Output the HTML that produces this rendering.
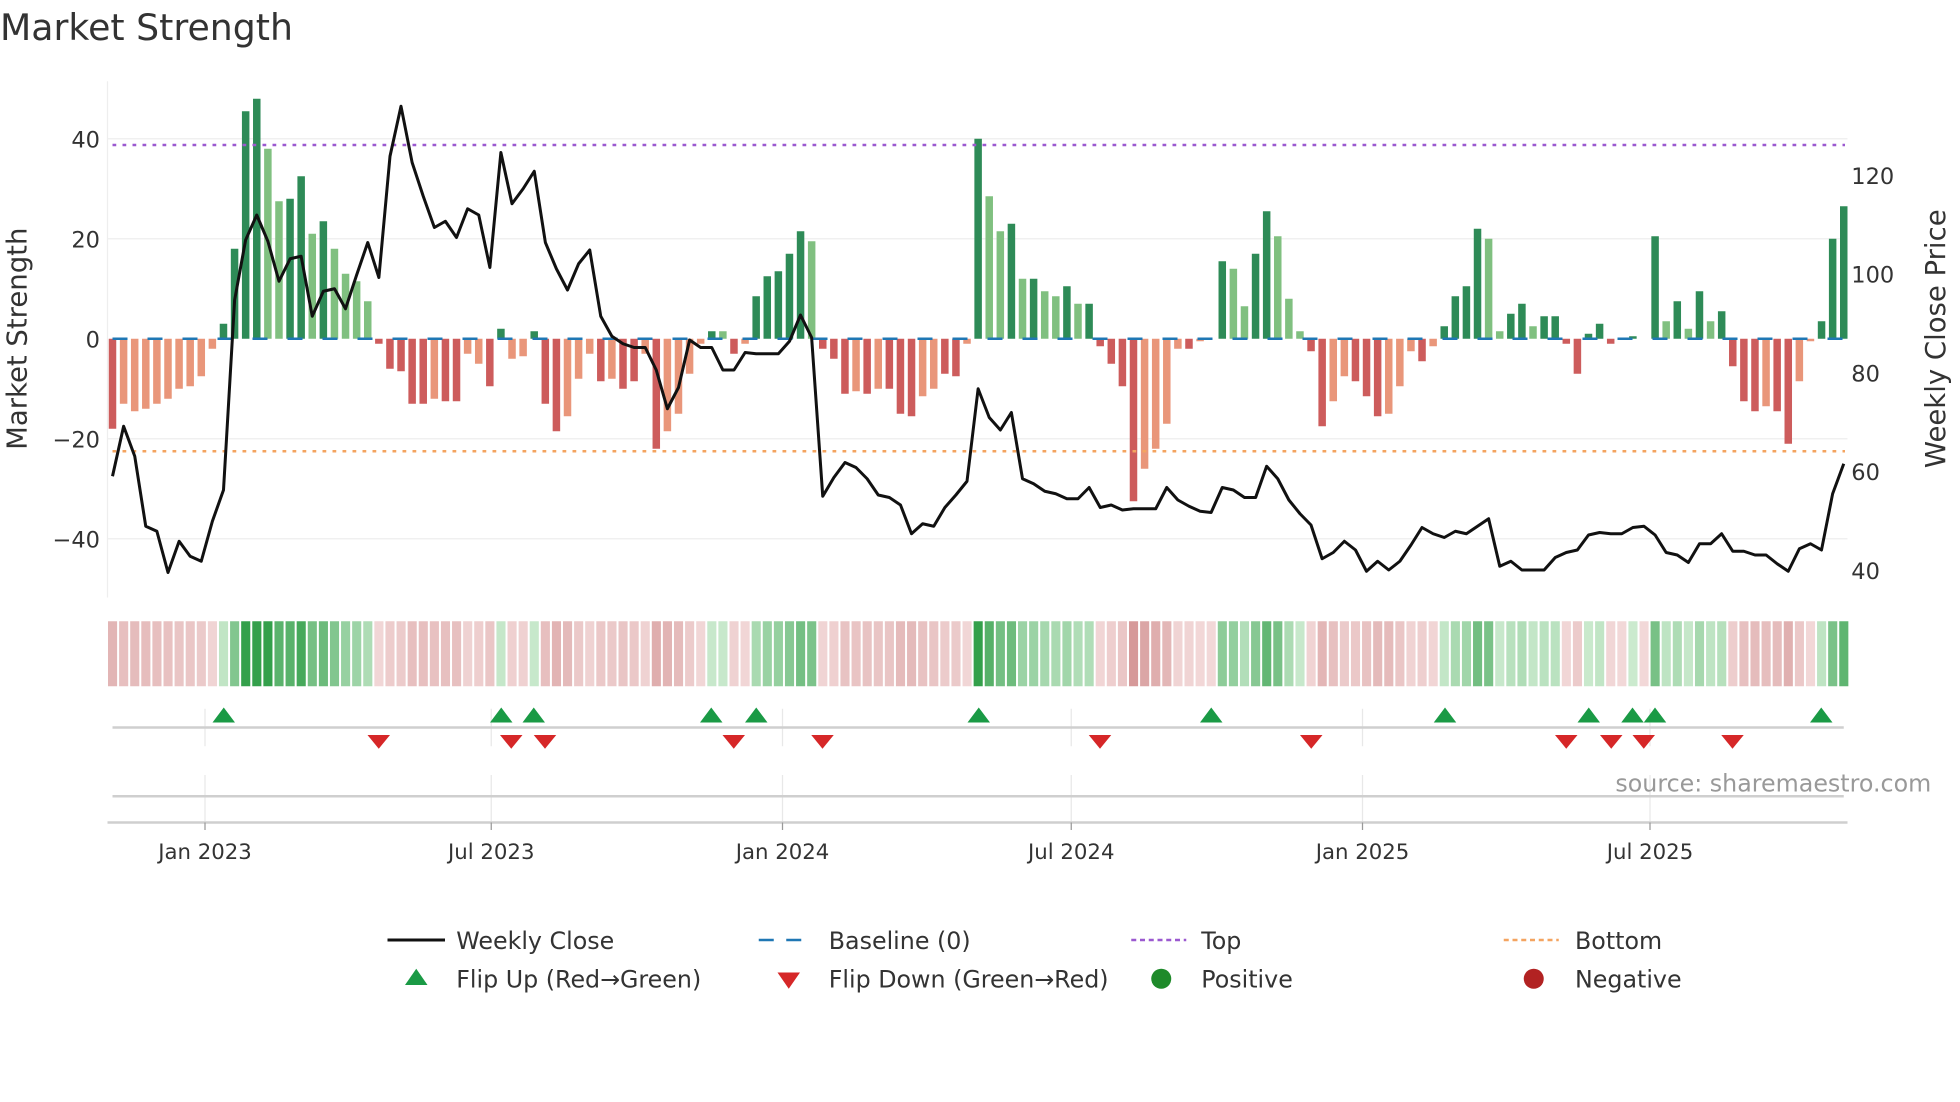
<!DOCTYPE html>
<html><head><meta charset="utf-8"><style>
html,body{margin:0;padding:0;background:#fff;}
svg{display:block;font-family:"DejaVu Sans","Liberation Sans",sans-serif;}
</style></head><body>
<svg id="s" width="1960" height="1102" viewBox="0 0 1568 881.6" xmlns="http://www.w3.org/2000/svg">
<rect width="1568" height="882" fill="#fff"/>
<text x="0" y="32" font-size="29" fill="#333">Market Strength</text>
<g id="grid" stroke="#eeeeee" stroke-width="1">
<line x1="86" y1="111" x2="1478" y2="111"/><line x1="86" y1="191" x2="1478" y2="191"/>
<line x1="86" y1="351" x2="1478" y2="351"/><line x1="86" y1="431" x2="1478" y2="431"/>
<line x1="86" y1="65" x2="86" y2="478"/>
</g>
<g id="bars"></g>
<line x1="90" y1="271" x2="1476" y2="271" stroke="#1f77b4" stroke-width="2" stroke-dasharray="12,16"/>
<line x1="90" y1="116" x2="1476" y2="116" stroke="#9b59d0" stroke-width="2" stroke-dasharray="3,5"/>
<line x1="90" y1="361" x2="1476" y2="361" stroke="#f4a460" stroke-width="2" stroke-dasharray="3,5"/>
<polyline id="price" fill="none" stroke="#111" stroke-width="2.4" stroke-linejoin="round"/>
<g font-size="18" fill="#333" text-anchor="end">
<text x="80" y="118">40</text><text x="80" y="198">20</text><text x="80" y="278">0</text>
<text x="80" y="358">−20</text><text x="80" y="438">−40</text></g>
<g font-size="18" fill="#333">
<text x="1481" y="147">120</text><text x="1481" y="226">100</text><text x="1481" y="305">80</text>
<text x="1481" y="384">60</text><text x="1481" y="463">40</text></g>
<text transform="translate(21,271) rotate(-90)" font-size="22" fill="#333" text-anchor="middle">Market Strength</text>
<text transform="translate(1556,271) rotate(-90)" font-size="22" fill="#333" text-anchor="middle">Weekly Close Price</text>
<g id="heat"></g>
<g stroke="#e8e8e8" stroke-width="1" id="vgrid"></g>
<line x1="90" y1="582" x2="1475" y2="582" stroke="#cfcfcf" stroke-width="2"/>
<line x1="90" y1="637" x2="1475" y2="637" stroke="#cfcfcf" stroke-width="2"/>
<line x1="86" y1="658" x2="1478" y2="658" stroke="#cfcfcf" stroke-width="2"/>
<g id="marks"></g>
<g id="ticks" font-size="17" fill="#333" text-anchor="middle"></g>
<text x="1545" y="633" font-size="19" fill="#999" text-anchor="end">source: sharemaestro.com</text>
<g font-size="19" fill="#333">
<line x1="310" y1="752" x2="356" y2="752" stroke="#111" stroke-width="2.4"/>
<text x="365" y="759">Weekly Close</text>
<line x1="607" y1="752" x2="651" y2="752" stroke="#1f77b4" stroke-width="2" stroke-dasharray="12,10"/>
<text x="663" y="759">Baseline (0)</text>
<line x1="905" y1="752" x2="949" y2="752" stroke="#9b59d0" stroke-width="2" stroke-dasharray="4,3"/>
<text x="961" y="759">Top</text>
<line x1="1203" y1="752" x2="1247" y2="752" stroke="#f4a460" stroke-width="2" stroke-dasharray="4,3"/>
<text x="1260" y="759">Bottom</text>
<polygon points="324,788 342,788 333,775" fill="#1a9a45"/>
<text x="365" y="790">Flip Up (Red→Green)</text>
<polygon points="622,778 640,778 631,791" fill="#d62728"/>
<text x="663" y="790">Flip Down (Green→Red)</text>
<circle cx="929" cy="783" r="8" fill="#1e8a2a"/>
<text x="961" y="790">Positive</text>
<circle cx="1227" cy="783" r="8" fill="#b22222"/>
<text x="1260" y="790">Negative</text>
</g>
</svg>
<script>
var V=[[-18,1],[-13,0],[-14.5,0],[-14,0],[-13,0],[-12,0],[-10,0],[-9.5,0],[-7.5,0],[-2,0],[3,1],[18,1],[45.5,1],[48,1],[38,0],[27.5,0],[28,1],[32.5,1],[21,0],[23.5,1],[18,0],[13,0],[11.5,0],[7.5,0],[-1,1],[-6,1],[-6.5,1],[-13,1],[-13,1],[-12,0],[-12.5,1],[-12.5,1],[-3,0],[-5,0],[-9.5,1],[2,1],[-4,0],[-3.5,0],[1.5,1],[-13,1],[-18.5,1],[-15.5,0],[-8,0],[-3,0],[-8.5,1],[-8,0],[-10,1],[-8.5,1],[-3,0],[-22,1],[-18.5,0],[-15,0],[-7,0],[-1,0],[1.5,1],[1.5,0],[-3,1],[-1,0],[8.5,1],[12.5,1],[13.5,1],[17,1],[21.5,1],[19.5,0],[-2,1],[-4,1],[-11,1],[-10.5,0],[-11,1],[-10,0],[-10,1],[-15,1],[-15.5,1],[-11.5,0],[-10,0],[-7,1],[-7.5,1],[-1,0],[40,1],[28.5,0],[21.5,0],[23,1],[12,0],[12,1],[9.5,0],[8.5,0],[10.5,1],[7,0],[7,1],[-1.5,1],[-5,1],[-9.5,1],[-32.5,1],[-26,0],[-22,0],[-17,0],[-2,0],[-2,1],[-0.5,0],[0,0],[15.5,1],[14,0],[6.5,0],[17,1],[25.5,1],[20.5,0],[8,0],[1.5,0],[-2.5,1],[-17.5,1],[-12.5,0],[-7.5,0],[-8.5,1],[-11.5,1],[-15.5,1],[-15,0],[-9.5,0],[-2.5,0],[-4.5,1],[-1.5,0],[2.5,1],[8.5,1],[10.5,1],[22,1],[20,0],[1.5,0],[5,1],[7,1],[2.5,0],[4.5,1],[4.5,1],[-1,1],[-7,1],[1,1],[3,1],[-1,1],[0,0],[0.5,1],[0,0],[20.5,1],[3.5,0],[7.5,1],[2,0],[9.5,1],[3.5,0],[5.5,1],[-5.5,1],[-12.5,1],[-14.5,1],[-13.5,0],[-14.5,1],[-21,1],[-8.5,0],[-0.5,0],[3.5,1],[20,1],[26.5,1]];
var P=[381,341,365,421,425,458,433,445,449,417,392,240,192,172,193,225,207,205,253,233,231,247,220,194,222,125,85,130,157,182,177,190,167,172,214,122,163,151,137,194,215,232,211,200,253,269,275,278,278,296,327,310,272,278,278,296,296,282,283,283,283,273,252,270,397,382,370,374,383,396,398,404,427,419,421,406,396,385,311,334,344,330,383,387,393,395,399,399,390,406,404,408,407,407,407,390,400,405,409,410,390,392,398,398,373,383,400,411,420,447,442,433,440,457,449,456,449,436,422,427,430,425,427,421,415,453,449,456,456,456,446,442,440,428,426,427,427,422,421,428,442,444,450,435,435,427,441,441,444,444,451,457,439,435,440,395,371];
var NS="http://www.w3.org/2000/svg";
function el(t,a,p){var e=document.createElementNS(NS,t);for(var k in a)e.setAttribute(k,a[k]);document.getElementById(p).appendChild(e);return e;}
var dx=1385/156,pts=[];
function mix(c1,c2,t){var r=[];for(var i=0;i<3;i++)r.push(Math.round(c1[i]+(c2[i]-c1[i])*t));return "rgb("+r.join(",")+")";}
for(var i=0;i<V.length;i++){
 var x=90+dx*i,v=V[i][0],d=V[i][1];
 if(v!=0){var y=v>0?271-4*v:271,h=Math.abs(4*v);
 var c=v>0?(d?"#2e8b57":"#80c080"):(d?"#cd5c5c":"#e9967a");
 el("rect",{x:x-3,y:y,width:6,height:h,fill:c},"bars");}
 pts.push(x.toFixed(1)+","+P[i]);
 var t=Math.min(1,Math.abs(v)/48);
 var hc=v>0?mix([205,235,208],[52,160,75],Math.min(1,t*1.3)):mix([242,216,216],[212,150,150],Math.min(1,t*1.4));
 el("rect",{x:x-4.4+0.8,y:497,width:dx-1.6,height:52,fill:hc},"heat");
}
document.getElementById("price").setAttribute("points",pts.join(" "));
var ups=[179,401,427,569,605,783,969,1156,1271,1306,1324,1457],dns=[303,409,436,587,658,880,1049,1253,1289,1315,1386];
ups.forEach(function(x){el("polygon",{points:(x-9)+",578 "+(x+9)+",578 "+x+",566",fill:"#1a9a45"},"marks");});
dns.forEach(function(x){el("polygon",{points:(x-9)+",588 "+(x+9)+",588 "+x+",599",fill:"#d62728"},"marks");});
var tk=[[164,"Jan 2023"],[393,"Jul 2023"],[626,"Jan 2024"],[857,"Jul 2024"],[1090,"Jan 2025"],[1320,"Jul 2025"]];
tk.forEach(function(a){el("line",{x1:a[0],y1:567,x2:a[0],y2:597},"vgrid");el("line",{x1:a[0],y1:620,x2:a[0],y2:657},"vgrid");
 el("line",{x1:a[0],y1:658,x2:a[0],y2:664,stroke:"#999","stroke-width":1},"ticks");
 var t=el("text",{x:a[0],y:687},"ticks");t.textContent=a[1];});
</script>
</body></html>
